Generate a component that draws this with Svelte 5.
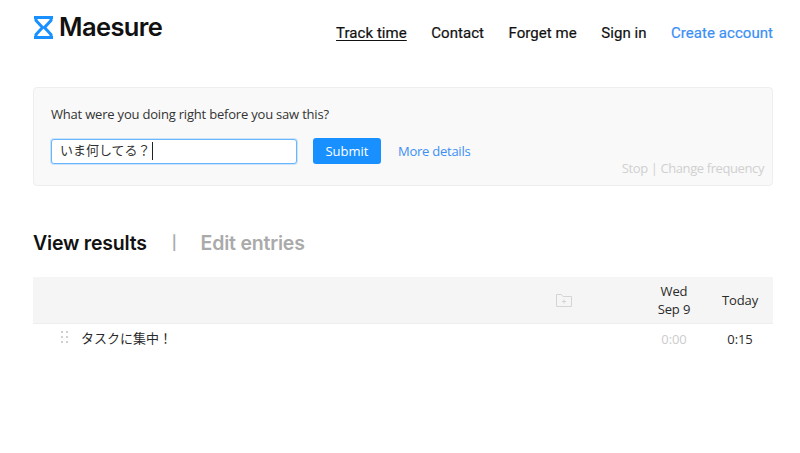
<script>
  const nav = [
    { label: "Track time", current: true },
    { label: "Contact" },
    { label: "Forget me" },
    { label: "Sign in" },
    { label: "Create account", accent: true },
  ];
  let answer = $state("いま何してる？");
</script>

<div class="page">
  <header class="topbar">
    <a class="logo" href="#home">
      <svg width="19" height="23" viewBox="0 0 19 23" aria-hidden="true">
        <path d="M0 1.500h19M0 21.500h19M2 1.500v3l6.500 7-6.500 7v3M17 1.500v3l-6.500 7 6.500 7v3" fill="none" stroke="#1890ff" stroke-width="3" />
      </svg>
      <span>Maesure</span>
    </a>
    <nav class="nav">
      {#each nav as item}
        <a href="#nav" class:current={item.current} class:accent={item.accent}>{item.label}</a>
      {/each}
    </nav>
  </header>

  <section class="prompt">
    <p class="question">What were you doing right before you saw this?</p>
    <div class="controls">
      <div class="field">
        <input type="text" bind:value={answer} />
        <span class="caret"></span>
      </div>
      <button class="submit">Submit</button>
      <a class="details" href="#details">More details</a>
    </div>
    <div class="stop">Stop | Change frequency</div>
  </section>

  <div class="tabs">
    <span class="tab active">View results</span>
    <span class="sep">|</span>
    <span class="tab">Edit entries</span>
  </div>

  <div class="table">
    <div class="row head">
      <span class="name">
        <svg class="folder" width="16" height="13" viewBox="0 0 16 13" aria-hidden="true">
          <path d="M.5 12.500V.5h5l1.500 2h8.500v10zM6 7.500h4M8 5.500v4" fill="none" stroke="#d4d4d4" />
        </svg>
      </span>
      <span class="day">Wed<br />Sep 9</span>
      <span class="today">Today</span>
    </div>
    <div class="row entry">
      <span class="name">
        <svg class="grip" width="8" height="13" viewBox="0 0 8 13" aria-hidden="true">
          <path d="M0 0h2v2H0zM5 0h2v2H5zM0 5h2v2H0zM5 5h2v2H5zM0 10h2v2H0zM5 10h2v2H5z" fill="#d0d0d0" />
        </svg>
        タスクに集中！
      </span>
      <span class="day muted">0:00</span>
      <span class="today">0:15</span>
    </div>
  </div>
</div>

<style>
  :global(body) {
    margin: 0;
    background: #fff;
    font-family: "Open Sans", "Noto Sans CJK JP", sans-serif;
    color: #222;
  }

  .page {
    width: 740px;
    padding: 0 27px 0 33px;
  }

  .topbar {
    display: flex;
    justify-content: space-between;
    align-items: flex-start;
    height: 87px;
  }

  .logo {
    display: flex;
    align-items: center;
    gap: 6px;
    margin: 16px 0 0 1px;
    color: #111;
    text-decoration: none;
    font: 600 25.500px/25px Inter, sans-serif;
    letter-spacing: -0.6px;
  }

  .logo span {
    margin-top: -2px;
  }

  .nav {
    display: flex;
    gap: 24.500px;
    margin-top: 24px;
  }

  .nav a {
    font: 400 15px/19px Roboto, sans-serif;
    -webkit-text-stroke: 0.2px currentColor;
    letter-spacing: 0.05px;
    color: #111;
    text-decoration: none;
  }

  .nav a.current {
    text-decoration: underline;
    text-underline-offset: 2px;
  }

  .nav a.accent {
    color: #3b8ff5;
  }

  .prompt {
    position: relative;
    box-sizing: border-box;
    height: 99px;
    padding: 17px 17px 0;
    background: #f9f9f9;
    border: 1px solid #eee;
    border-radius: 4px;
  }

  .question {
    margin: 0 0 15px;
    font-size: 13px;
    letter-spacing: -0.2px;
    line-height: 18px;
    color: #333;
  }

  .controls {
    display: flex;
    align-items: center;
  }

  .field {
    position: relative;
    margin-right: 16px;
  }

  input {
    display: block;
    box-sizing: border-box;
    width: 246px;
    height: 25px;
    padding: 0 8px 4px;
    border: 1px solid #69b6ff;
    border-radius: 3px;
    outline: none;
    box-shadow: 0 0 0 1px rgba(24, 144, 255, 0.2);
    background: #fff;
    caret-color: transparent;
    font: 13px "Noto Sans CJK JP", sans-serif;
    color: #333;
  }

  .caret {
    position: absolute;
    left: 101px;
    top: 3px;
    width: 1px;
    height: 18px;
    background: #222;
  }

  .submit {
    width: 68px;
    height: 26px;
    padding: 0;
    border: none;
    border-radius: 3px;
    background: #1890ff;
    color: #fff;
    font: 13px "Open Sans", sans-serif;
  }

  .details {
    margin-left: 17px;
    font-size: 13px;
    letter-spacing: -0.25px;
    color: #3b8ff5;
    text-decoration: none;
  }

  .stop {
    position: absolute;
    right: 8px;
    bottom: 8px;
    font-size: 13px;
    letter-spacing: -0.4px;
    line-height: 18px;
    color: #d0d0d0;
  }

  .tabs {
    display: flex;
    align-items: center;
    height: 26px;
    margin: 44px 0 21px;
    font: 600 19.500px/26px Inter, sans-serif;
    letter-spacing: -0.2px;
  }

  .tab {
    color: #aaa;
  }

  .tab.active {
    color: #111;
    margin-right: 25px;
  }

  .sep {
    color: #aaa;
    font-size: 14px;
    margin-right: 24px;
  }

  .row {
    display: grid;
    grid-template-columns: 1fr 66px 66px;
    align-items: center;
    font-size: 13px;
    letter-spacing: -0.1px;
    text-align: center;
    color: #2a2a2a;
  }

  .head {
    height: 46px;
    background: #f5f5f5;
    border-bottom: 1px solid #eee;
    line-height: 18px;
  }

  .head .name {
    display: flex;
    justify-content: flex-end;
    padding-right: 69px;
  }

  .entry {
    height: 30px;
  }

  .entry .name {
    display: flex;
    align-items: center;
    gap: 12px;
    padding-left: 28px;
    text-align: left;
    margin-top: -4px;
    letter-spacing: 0;
  }

  .muted {
    color: #ccc;
  }
</style>
